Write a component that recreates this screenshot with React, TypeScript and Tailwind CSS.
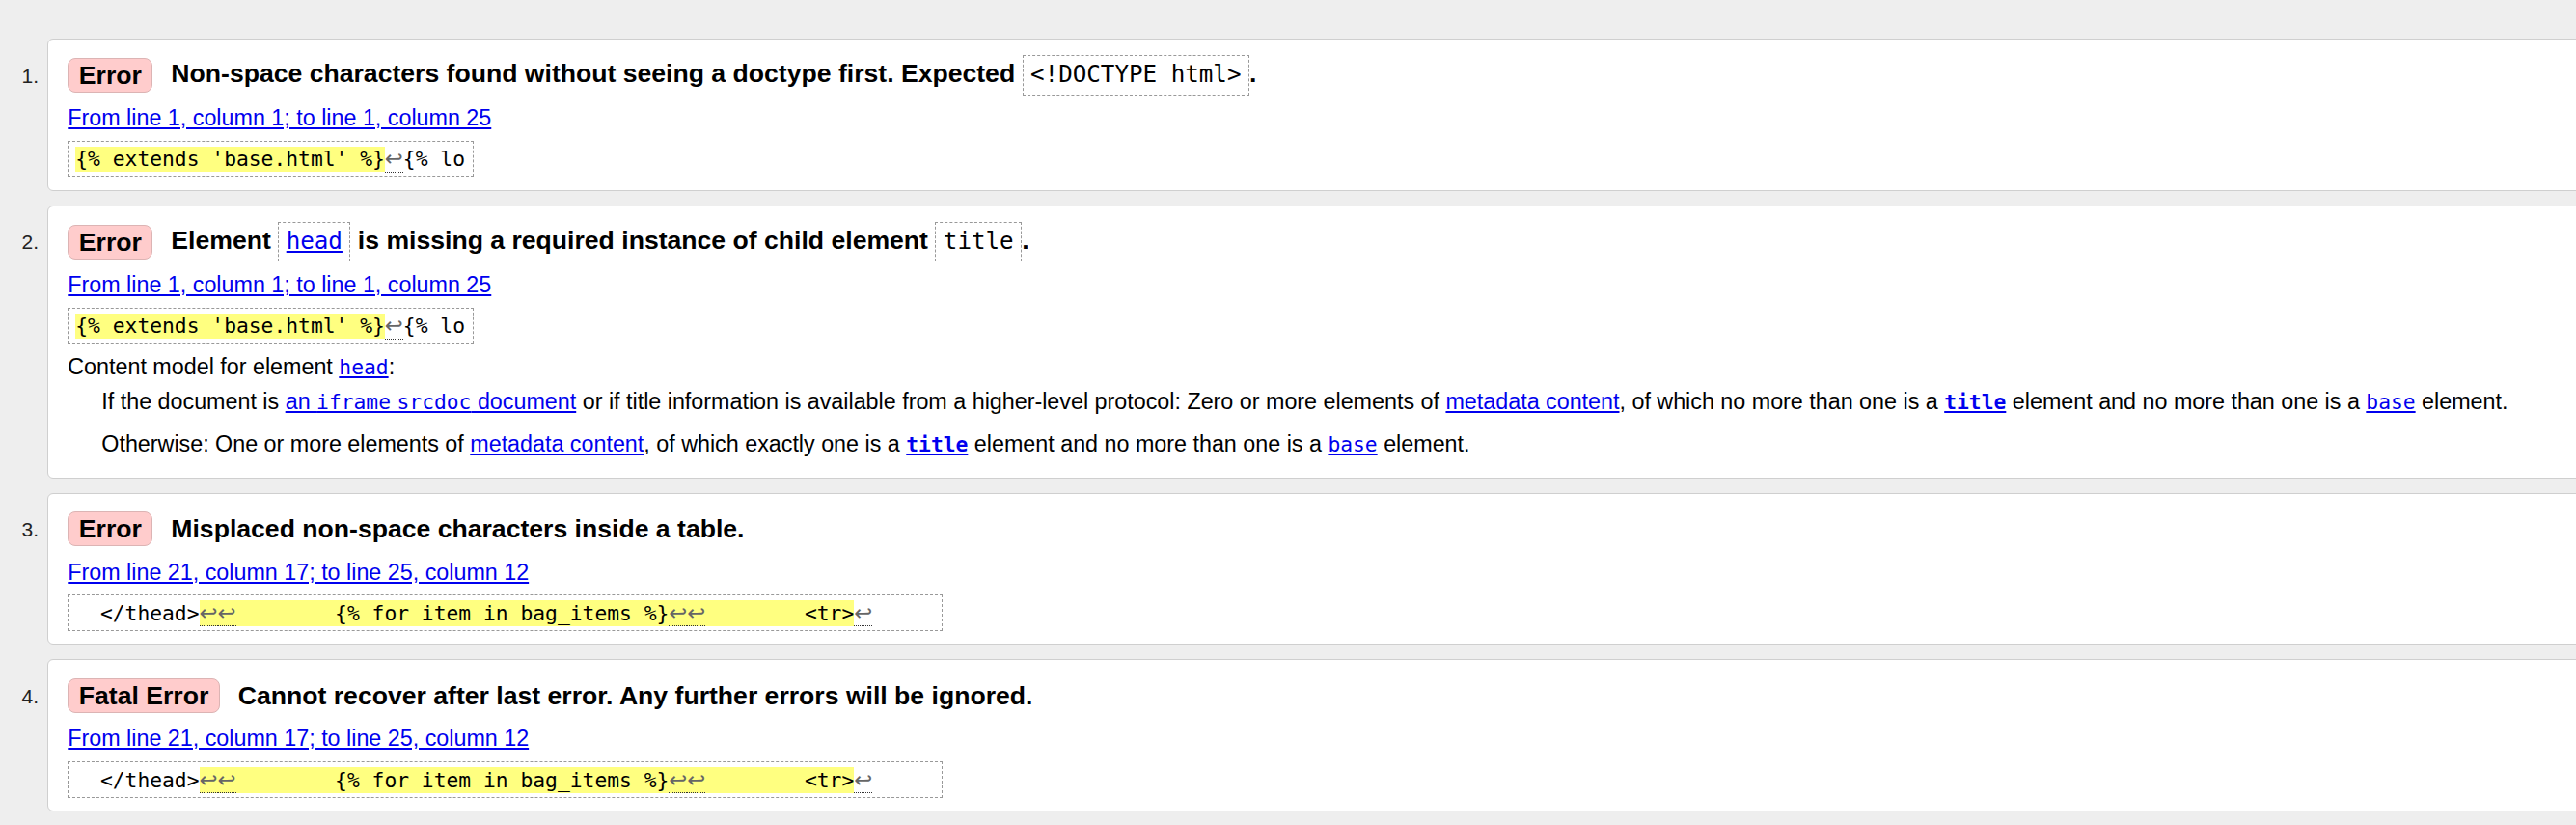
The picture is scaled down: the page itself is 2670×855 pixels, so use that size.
import React from "react";

const SANS = "font-['Liberation_Sans',Arial,sans-serif]";
const MONO = "font-['DejaVu_Sans_Mono',monospace]";

const LF = () => (
  <span className="relative inline-block font-['DejaVu_Sans',sans-serif] text-[22.7px] leading-[26px] text-[#666]">
    ↩
    <span className="absolute left-0 right-0 bottom-[-1.5px] border-b border-dotted border-[#333]" />
  </span>
);

const Mark = ({ children }: { children: React.ReactNode }) => (
  <span className="inline-block bg-[#ffff80] leading-[26px]">{children}</span>
);

const Extract = ({ children }: { children: React.ReactNode }) => (
  <div className="mt-[9.9px] flex">
    <code
      className={`${MONO} block whitespace-pre border border-dashed border-[#999] pl-[7px] pr-[8px] pt-[4.5px] pb-[4px] text-[21.3px] leading-[26px] text-black`}
    >
      {children}
    </code>
  </div>
);

const HCode = ({ children }: { children: React.ReactNode }) => (
  <code
    className={`${MONO} inline-block border border-dashed border-[#999] px-[7.5px] py-[4.2px] text-[24.2px] font-normal leading-[31px]`}
  >
    {children}
  </code>
);

const Badge = ({ children }: { children: React.ReactNode }) => (
  <span className="inline-flex h-[36px] shrink-0 items-center rounded-[8px] border border-[#dcb4b4] bg-[#ffcccc] px-[10.5px] text-[26.6px] font-bold leading-[30px] text-black">
    {children}
  </span>
);

const Link = ({ children }: { children: React.ReactNode }) => (
  <a href="#" className="text-[#0000ee] underline">
    {children}
  </a>
);

const BMono = ({ children, bold }: { children: React.ReactNode; bold?: boolean }) => (
  <code className={`${MONO} text-[21.3px] ${bold ? "font-bold" : "font-normal"}`}>{children}</code>
);

const Item = ({
  n,
  badge,
  title,
  children,
  pb,
}: {
  n: number;
  badge: string;
  title: React.ReactNode;
  children: React.ReactNode;
  pb: string;
}) => (
  <li className="flex">
    <div className="w-[49px] shrink-0 pr-[9px] pt-[28.7px] text-right text-[21px] leading-[20px] text-[#222]">
      {n}.
    </div>
    <div
      className={`-mr-[40px] flex-1 rounded-[6px] border border-[#cfcfcf] bg-white pl-[20.3px] pt-[16.3px] ${pb}`}
    >
      <div className="flex min-h-[41.4px] items-center gap-[19px]">
        <Badge>{badge}</Badge>
        <span className="text-[26.6px] font-bold leading-[30px] text-black">{title}</span>
      </div>
      <p className="mt-[10.4px] leading-[27px]">
        <Link>
          {n <= 2 ? "From line 1, column 1; to line 1, column 25" : "From line 21, column 17; to line 25, column 12"}
        </Link>
      </p>
      {children}
    </div>
  </li>
);

const TheadExtract = () => (
  <Extract>
    {"  </thead>"}
    <Mark>
      <LF />
      <LF />
      {"        {% for item in bag_items %}"}
      <LF />
      <LF />
      {"        <tr>"}
    </Mark>
    <LF />
    {"     "}
  </Extract>
);

export default function App() {
  return (
    <div className={`${SANS} h-[855px] w-full overflow-hidden bg-[#eeeeee] pt-[40px] text-[23.3px] text-black`}>
      <ol className="flex flex-col gap-[15px]">
        <Item
          n={1}
          badge="Error"
          pb="pb-[13.3px]"
          title={
            <>
              Non-space characters found without seeing a doctype first. Expected <HCode>{"<!DOCTYPE html>"}</HCode>.
            </>
          }
        >
          <Extract>
            <Mark>{"{% extends 'base.html' %}"}</Mark>
            <LF />
            {"{% lo"}
          </Extract>
        </Item>

        <Item
          n={2}
          badge="Error"
          pb="pb-[20.2px]"
          title={
            <>
              Element{" "}
              <HCode>
                <Link>head</Link>
              </HCode>{" "}
              is missing a required instance of child element <HCode>title</HCode>.
            </>
          }
        >
          <Extract>
            <Mark>{"{% extends 'base.html' %}"}</Mark>
            <LF />
            {"{% lo"}
          </Extract>
          <p className="mt-[11.1px] leading-[27px]">
            Content model for element{" "}
            <Link>
              <BMono>head</BMono>
            </Link>
            :
          </p>
          <div className="pl-[35px]">
            <p className="mt-[8.3px] leading-[27px]">
              If the document is{" "}
              <Link>
                an <BMono>iframe</BMono> <BMono>srcdoc</BMono> document
              </Link>{" "}
              or if title information is available from a higher-level protocol: Zero or more elements of{" "}
              <Link>metadata content</Link>, of which no more than one is a{" "}
              <Link>
                <BMono bold>title</BMono>
              </Link>{" "}
              element and no more than one is a{" "}
              <Link>
                <BMono>base</BMono>
              </Link>{" "}
              element.
            </p>
            <p className="mt-[17.7px] leading-[27px]">
              Otherwise: One or more elements of <Link>metadata content</Link>, of which exactly one is a{" "}
              <Link>
                <BMono bold>title</BMono>
              </Link>{" "}
              element and no more than one is a{" "}
              <Link>
                <BMono>base</BMono>
              </Link>{" "}
              element.
            </p>
          </div>
        </Item>

        <Item n={3} badge="Error" pb="pb-[13.3px]" title={<>Misplaced non-space characters inside a table.</>}>
          <TheadExtract />
        </Item>

        <Item
          n={4}
          badge="Fatal Error"
          pb="pb-[13.3px]"
          title={<>Cannot recover after last error. Any further errors will be ignored.</>}
        >
          <TheadExtract />
        </Item>
      </ol>
    </div>
  );
}
